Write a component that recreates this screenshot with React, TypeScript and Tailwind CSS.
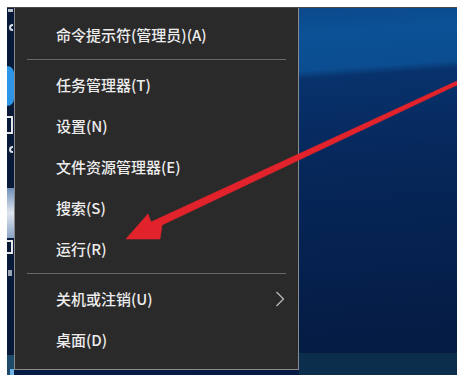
import React from 'react';

const font = { fontFamily: '"Noto Sans CJK SC", "Noto Sans", sans-serif' };

const MenuRow = ({ label, sub }: { label: string; sub?: boolean }) => (
  <div className="flex h-[41px] items-center justify-between pl-[41px] pr-[13px]">
    <span className="text-[15px] font-medium leading-none text-[#ededed]">{label}</span>
    {sub && (
      <svg width="10" height="16" viewBox="0 0 10 16" fill="none">
        <path d="M1.5 1 L8.5 8 L1.5 15" stroke="#b8b8b8" strokeWidth="1.3" />
      </svg>
    )}
  </div>
);

const Separator = () => <div className="mx-[12px] my-[4px] h-px bg-[#686868]" />;

const App: React.FC = () => {
  return (
    <div className="h-[384px] w-[469px] bg-white p-[7px] pb-[9px] pr-[12px]" style={font}>
      <div className="relative flex h-full w-full border-t border-[#4a4a4a] bg-[linear-gradient(176deg,#0a4384_0%,#0c5196_12%,#0b4d90_21%,#08326c_23%,#06275a_45%,#051b42_95%)]">
        {/* desktop strip on the left, bits of icons peeking out */}
        <div className="flex w-[7px] shrink-0 flex-col bg-[#081a38]">
          <div className="ml-[1px] mt-[1px] h-[3px] w-[5px] bg-[#b9c2cc]" />
          <div className="ml-[2px] mt-[12px] h-[7px] w-[4px] rounded-l-full border-2 border-r-0 border-[#d8dde4]" />
          <div className="mt-[35px] h-[40px] w-[7px] rounded-r-full bg-[#2d96e6]" />
          <div className="mt-[10px] h-[18px] w-[6px] border-2 border-l-0 border-[#e4e6ea]" />
          <div className="ml-[2px] mt-[12px] h-[7px] w-[4px] rounded-l-full border-2 border-r-0 border-[#d8dde4]" />
          <div className="mt-[35px] h-[50px] w-[7px] bg-[linear-gradient(180deg,#6f8fb8,#dfe6ef,#8aa3c4)]" />
          <div className="mt-[2px] h-[14px] w-[6px] border-2 border-l-0 border-[#e4e6ea]" />
          <div className="ml-[1px] mt-[16px] h-[6px] w-[4px] bg-[#9aa6b4]" />
          <div className="mt-auto flex h-[20px] w-[7px] items-end justify-end bg-[#1e4a6c]">
            <div className="h-[6px] w-[4px] bg-[#6fb3e6]" />
          </div>
        </div>

        {/* context menu */}
        <div className="h-[362px] w-[285px] shrink-0 border-x border-b border-[#8a8a8a] bg-[#2b2a2a] pt-[6px]">
          <MenuRow label="命令提示符(管理员)(A)" />
          <Separator />
          <MenuRow label="任务管理器(T)" />
          <MenuRow label="设置(N)" />
          <MenuRow label="文件资源管理器(E)" />
          <MenuRow label="搜索(S)" />
          <MenuRow label="运行(R)" />
          <Separator />
          <MenuRow label="关机或注销(U)" sub />
          <MenuRow label="桌面(D)" />
        </div>

        {/* rest of desktop, taskbar at bottom */}
        <div className="flex flex-1 flex-col justify-end">
          <div className="h-[22px] bg-[#0a2e4c]" />
        </div>

        {/* red arrow drawn over the screenshot */}
        <svg className="pointer-events-none absolute inset-0 h-full w-full" viewBox="7 8 450 367" preserveAspectRatio="none">
          <polygon
            points="126,239 148,214 151,222 457,81 457,85 162,225 160,239"
            fill="#e2232b"
            stroke="#e2232b"
            strokeWidth="0.6"
            strokeLinejoin="round"
          />
        </svg>
      </div>
    </div>
  );
};

export default App;
